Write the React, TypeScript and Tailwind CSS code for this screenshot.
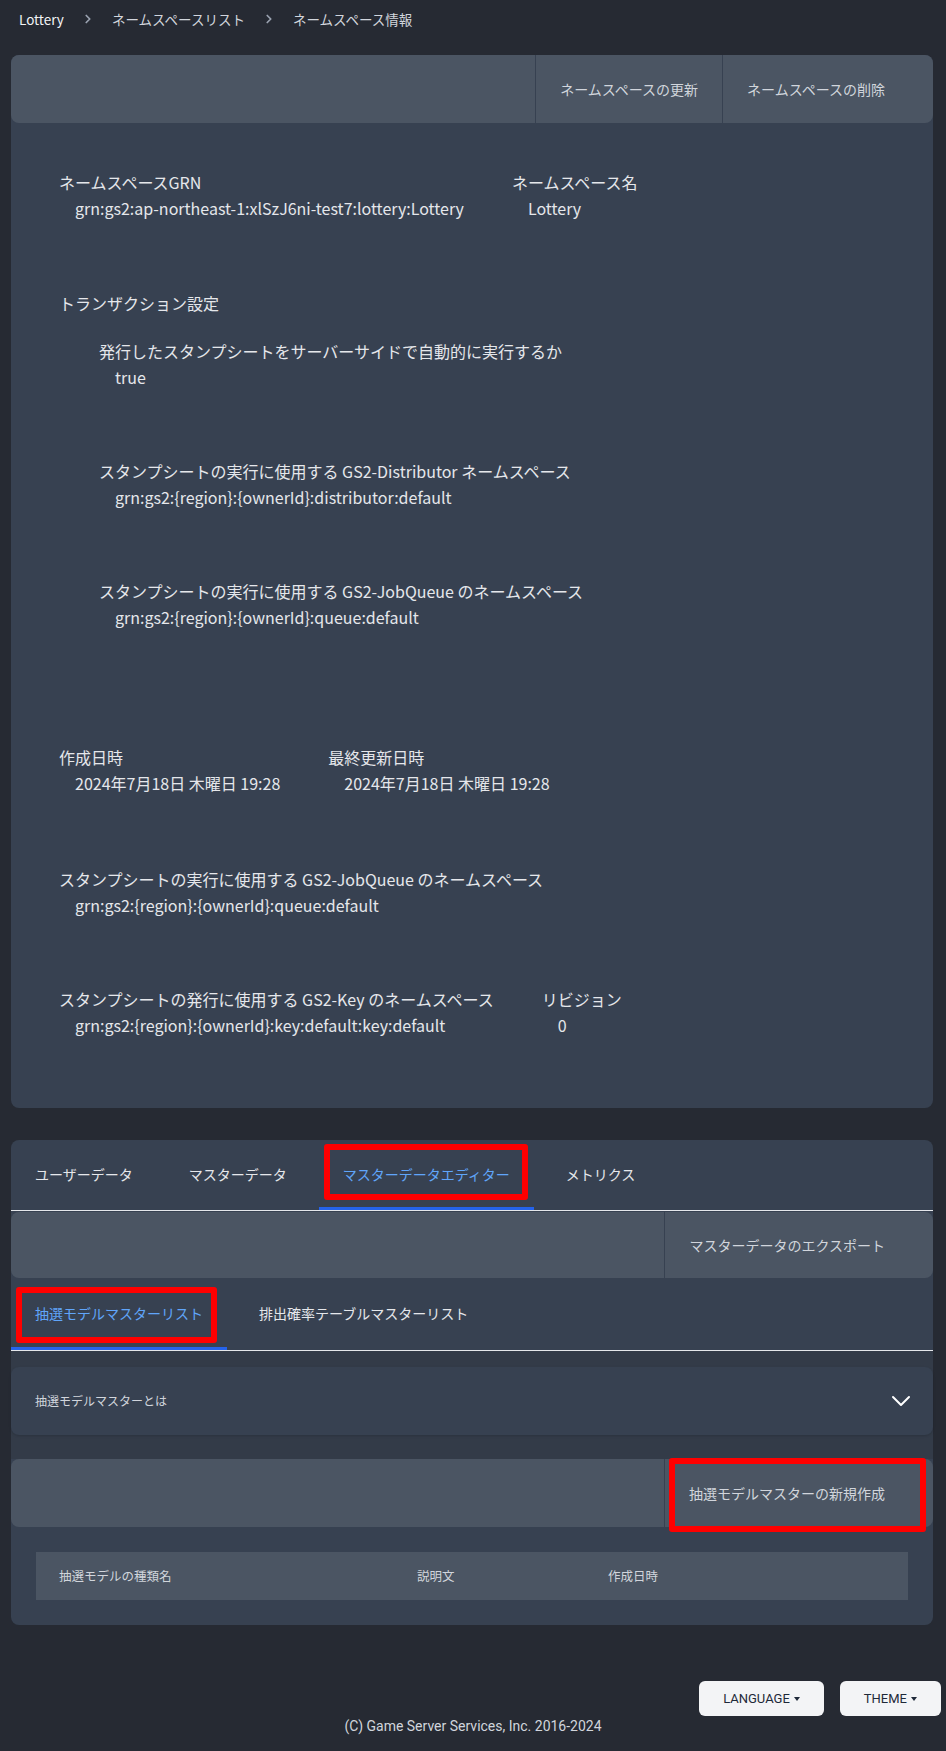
import { ChevronDown, ChevronRight } from 'lucide-react';

const jp = "font-['Noto_Sans_CJK_JP','Noto_Sans',sans-serif]";

function Field({ label, value, className = '' }: { label: string; value: string; className?: string }) {
  return (
    <div className={className}>
      <div className="leading-6">{label}</div>
      <div className="mt-0.5 pl-4 leading-6">{value}</div>
    </div>
  );
}

function RedBox({ className }: { className: string }) {
  return <div className={`pointer-events-none absolute rounded-[3px] border-[6px] border-[#ff0000] ${className}`} />;
}

export default function App() {
  const tabs = ['ユーザーデータ', 'マスターデータ', 'マスターデータエディター', 'メトリクス'];

  return (
    <div className={`min-h-[1751px] bg-[#262a33] ${jp}`}>
      {/* breadcrumb */}
      <div className="flex items-center pl-[19px] pt-[9px] text-[13.5px] leading-5">
        <span className="text-gray-100">Lottery</span>
        <ChevronRight size={14} strokeWidth={3} className="mx-[17px] text-gray-400" />
        <span className="text-gray-300">ネームスペースリスト</span>
        <ChevronRight size={14} strokeWidth={3} className="mx-[17px] text-gray-400" />
        <span className="text-gray-300">ネームスペース情報</span>
      </div>

      <div className="pl-[11px] pr-[13px] pt-[26px]">
        {/* namespace card */}
        <div className="rounded-lg bg-[#374151] text-gray-200">
          <div className="flex h-[68px] justify-end rounded-lg bg-[#4b5563] pr-6">
            <button className="border-l border-[#374151] px-6 text-sm text-gray-300">ネームスペースの更新</button>
            <button className="border-l border-[#374151] px-6 text-sm text-gray-300">ネームスペースの削除</button>
          </div>

          <div className="flex flex-col px-12 pt-[47px] text-base">
            <div className="mb-[71px] flex gap-12">
              <Field label="ネームスペースGRN" value="grn:gs2:ap-northeast-1:xlSzJ6ni-test7:lottery:Lottery" />
              <Field label="ネームスペース名" value="Lottery" />
            </div>

            <div className="mb-[46px]">
              <div className="leading-6">トランザクション設定</div>
              <div className="mt-6 flex flex-col pl-10">
                <Field className="mb-[70px]" label="発行したスタンプシートをサーバーサイドで自動的に実行するか" value="true" />
                <Field
                  className="mb-[70px]"
                  label="スタンプシートの実行に使用する GS2-Distributor ネームスペース"
                  value="grn:gs2:{region}:{ownerId}:distributor:default"
                />
                <Field
                  className="mb-[70px]"
                  label="スタンプシートの実行に使用する GS2-JobQueue のネームスペース"
                  value="grn:gs2:{region}:{ownerId}:queue:default"
                />
              </div>
            </div>

            <div className="mb-[72px] flex gap-12">
              <Field label="作成日時" value="2024年7月18日 木曜日 19:28" />
              <Field label="最終更新日時" value="2024年7月18日 木曜日 19:28" />
            </div>

            <Field
              className="mb-[70px]"
              label="スタンプシートの実行に使用する GS2-JobQueue のネームスペース"
              value="grn:gs2:{region}:{ownerId}:queue:default"
            />

            <div className="flex gap-12 pb-[71px]">
              <Field label="スタンプシートの発行に使用する GS2-Key のネームスペース" value="grn:gs2:{region}:{ownerId}:key:default:key:default" />
              <Field label="リビジョン" value="0" />
            </div>
          </div>
        </div>

        {/* master data card */}
        <div className="mt-8 rounded-lg bg-[#374151] text-gray-200">
          <div className="flex gap-2 border-b border-gray-200">
            {tabs.map((t, i) => (
              <button
                key={t}
                className={`relative h-[70px] border-b-[3px] px-6 text-sm ${
                  i === 2 ? 'border-[#2563eb] text-[#60a5fa]' : 'border-transparent text-gray-200'
                }`}
              >
                {t}
                {i === 2 && <RedBox className="left-[5px] right-[6px] top-[4px] h-[56px]" />}
              </button>
            ))}
          </div>

          <div className="mt-px flex h-[66px] justify-end rounded-lg bg-[#4b5563] pr-6">
            <button className="border-l border-[#374151] px-6 text-sm text-gray-300">マスターデータのエクスポート</button>
          </div>

          <div className="flex gap-2 border-b border-gray-200">
            <button className="relative h-[72px] border-b-[3px] border-[#2563eb] px-6 text-sm text-[#60a5fa]">
              抽選モデルマスターリスト
              <RedBox className="left-[5px] right-[10px] top-[9px] h-[56px]" />
            </button>
            <button className="h-[72px] border-b-[3px] border-transparent px-6 text-sm text-gray-200">
              排出確率テーブルマスターリスト
            </button>
          </div>

          <div className="bg-[#333b48] pb-6 pt-4">
            <div className="flex h-[68px] items-center justify-between rounded-lg bg-[#374151] px-6 shadow-sm">
              <span className="text-xs text-gray-300">抽選モデルマスターとは</span>
              <ChevronDown size={32} strokeWidth={1.5} className="-mr-2 text-white" />
            </div>
          </div>

          <div className="relative flex h-[68px] justify-end rounded-lg bg-[#4b5563] pr-6">
            <button className="border-l border-[#374151] px-6 text-sm text-gray-300">抽選モデルマスターの新規作成</button>
            <RedBox className="right-[7px] top-[-1px] h-[74px] w-[257px]" />
          </div>

          <div className="p-[25px]">
            <div className="grid h-12 grid-cols-[358px_191px_1fr] items-center bg-[#4b5563] px-[23px] text-[12.5px] text-gray-300">
              <span>抽選モデルの種類名</span>
              <span>説明文</span>
              <span>作成日時</span>
            </div>
          </div>
        </div>
      </div>

      {/* footer */}
      <div className="mt-14 flex justify-end gap-4 pr-[5px] font-['Roboto',sans-serif]">
        <button className="flex h-[35px] items-center rounded-md bg-gray-100 px-6 text-[13px] text-gray-800">
          LANGUAGE
          <span className="ml-1 border-x-[3.5px] border-t-[4px] border-x-transparent border-t-gray-800" />
        </button>
        <button className="flex h-[35px] items-center rounded-md bg-gray-100 px-6 text-[13px] text-gray-800">
          THEME
          <span className="ml-1 border-x-[3.5px] border-t-[4px] border-x-transparent border-t-gray-800" />
        </button>
      </div>
      <div className="pb-[15px] text-center font-['Roboto',sans-serif] text-sm leading-5 text-gray-300">
        (C) Game Server Services, Inc. 2016-2024
      </div>
    </div>
  );
}
